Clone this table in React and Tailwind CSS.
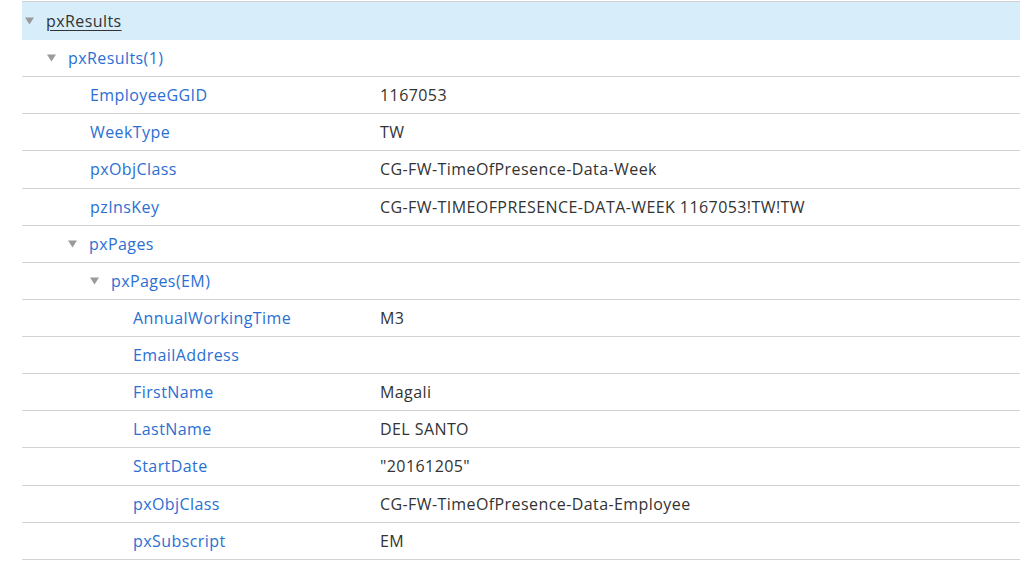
import React from "react";

const rows = [
  { label: "pxResults(1)", pad: "pl-[25px]", open: true },
  { label: "EmployeeGGID", pad: "pl-[68px]", value: "1167053" },
  { label: "WeekType", pad: "pl-[68px]", value: "TW" },
  { label: "pxObjClass", pad: "pl-[68px]", value: "CG-FW-TimeOfPresence-Data-Week" },
  { label: "pzInsKey", pad: "pl-[68px]", value: "CG-FW-TIMEOFPRESENCE-DATA-WEEK 1167053!TW!TW" },
  { label: "pxPages", pad: "pl-[46px]", open: true },
  { label: "pxPages(EM)", pad: "pl-[68px]", open: true },
  { label: "AnnualWorkingTime", pad: "pl-[111px]", value: "M3" },
  { label: "EmailAddress", pad: "pl-[111px]", value: "" },
  { label: "FirstName", pad: "pl-[111px]", value: "Magali" },
  { label: "LastName", pad: "pl-[111px]", value: "DEL SANTO" },
  { label: "StartDate", pad: "pl-[111px]", value: "\"20161205\"" },
  { label: "pxObjClass", pad: "pl-[111px]", value: "CG-FW-TimeOfPresence-Data-Employee" },
  { label: "pxSubscript", pad: "pl-[111px]", value: "EM" },
];

function Caret() {
  return (
    <svg width="9" height="8" viewBox="0 0 9 8" className="mr-[12px] shrink-0">
      <path d="M0 0.5 L9 0.5 L4.5 7.5 Z" fill="#9a9a9a" />
    </svg>
  );
}

export default function App() {
  return (
    <div className="bg-white w-[1021px] h-[563px] pt-px font-['Open_Sans',sans-serif] text-[16px] tracking-[0.42px]">
      <div className="ml-[22px] mr-px">
        <div className="h-[39px] flex items-center bg-[#d7eefa] border-t border-[#d0d0d0] pl-[3px]">
          <Caret />
          <span className="text-[#333] underline underline-offset-[3px] decoration-1">pxResults</span>
        </div>
        {rows.map((r, i) => (
          <div key={i} className="h-[37.14px] flex items-center border-b border-[#d3d3d3]">
            <div className={"flex items-center w-[358px] " + r.pad}>
              {r.open ? <Caret /> : null}
              <span className="text-[#2b6fd3]">{r.label}</span>
            </div>
            <span className="text-[#333]">{r.value}</span>
          </div>
        ))}
      </div>
    </div>
  );
}
